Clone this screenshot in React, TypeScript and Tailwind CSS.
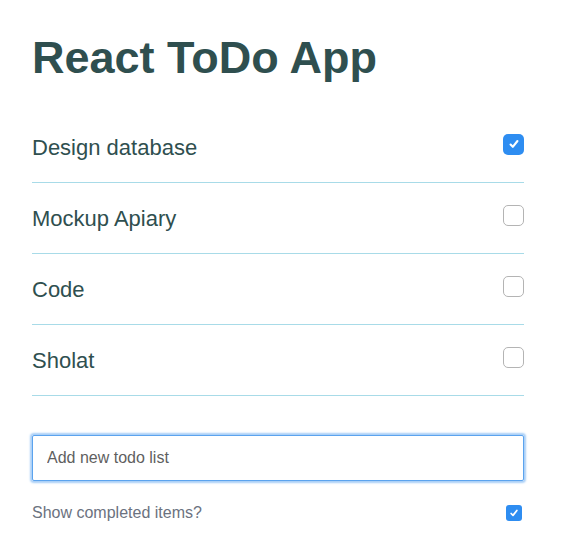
import React, { useState } from 'react';

type Todo = { id: number; title: string; done: boolean };

const Check = ({ checked, size }: { checked: boolean; size: 'lg' | 'sm' }) => {
    const box = size === 'lg' ? 'w-[21px] h-[21px] rounded-[5px]' : 'w-[16px] h-[16px] rounded-[3px]';
    if (!checked) {
        return <span className={`${box} block shrink-0 bg-white border-[1.5px] border-[#b4b4b4]`} />;
    }
    return (
        <span className={`${box} flex shrink-0 items-center justify-center bg-[#2e8df1]`}>
            <svg viewBox="0 0 16 16" className={size === 'lg' ? 'w-[12px] h-[12px]' : 'w-[10px] h-[10px]'}>
                <path d="M3.4 8.8 L6.4 11.8 L12.6 4" fill="none" stroke="#fff" strokeWidth="2.8" strokeLinecap="round" strokeLinejoin="round" />
            </svg>
        </span>
    );
};

export default function App() {
    const [todos] = useState<Todo[]>([
        { id: 1, title: 'Design database', done: true },
        { id: 2, title: 'Mockup Apiary', done: false },
        { id: 3, title: 'Code', done: false },
        { id: 4, title: 'Sholat', done: false },
    ]);
    const [text, setText] = useState('');

    return (
        <div className="min-h-screen bg-white font-['Liberation_Sans',Arial,sans-serif]">
            <div className="ml-[32px] w-[492px] pt-[36px]">
                <h1 className="text-[45px] leading-[44px] font-bold text-[#2f4f4f]">React ToDo App</h1>

                <ul className="mt-[32px]">
                    {todos.map((todo) => (
                        <li key={todo.id} className="flex h-[71px] items-center justify-between border-b border-[#a8dbe8]">
                            <span className="text-[22px] text-[#2f4f4f]">{todo.title}</span>
                            <span className="mb-[6px]"><Check checked={todo.done} size="lg" /></span>
                        </li>
                    ))}
                </ul>

                <input
                    value={text}
                    onChange={(e) => setText(e.target.value)}
                    placeholder="Add new todo list"
                    className="mt-[39px] block h-[46px] w-full rounded-[2px] border border-[#5ba3ee] px-[14px] text-[16px] text-[#555] placeholder:text-[#5f5f5f] outline-none shadow-[0_0_2px_2px_#a9cff7]"
                />

                <div className="mt-[20px] flex h-[24px] items-center justify-between">
                    <span className="text-[16px] text-[#6b7280]">Show completed items?</span>
                    <span className="mr-[2px]"><Check checked size="sm" /></span>
                </div>
            </div>
        </div>
    );
}
